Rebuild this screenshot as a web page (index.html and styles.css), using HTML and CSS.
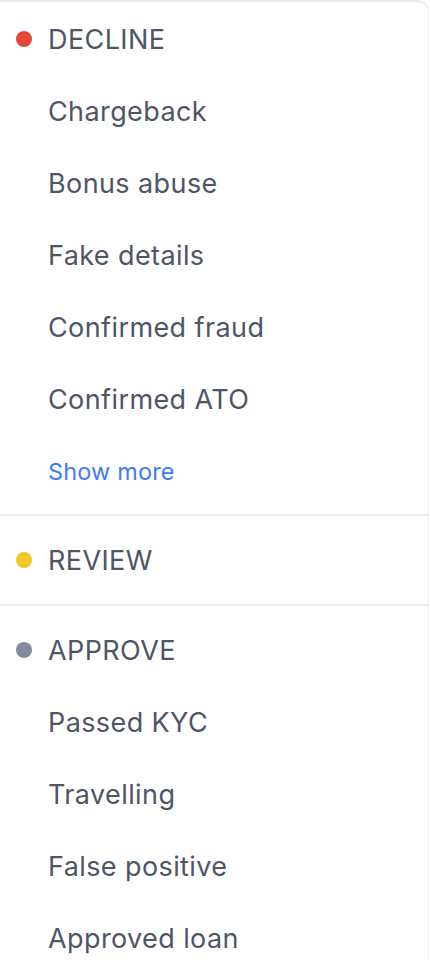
FILE: index.html
```html
<!DOCTYPE html>
<html lang="en">
<head>
<meta charset="utf-8">
<link rel="stylesheet" href="styles.css">
</head>
<body>
<div class="card">
  <section class="group">
    <div class="head"><span class="dot red"></span><span>DECLINE</span></div>
    <div class="item">Chargeback</div>
    <div class="item">Bonus abuse</div>
    <div class="item">Fake details</div>
    <div class="item">Confirmed fraud</div>
    <div class="item">Confirmed ATO</div>
    <div class="more">Show more</div>
  </section>
  <section class="group">
    <div class="head"><span class="dot yellow"></span><span>REVIEW</span></div>
  </section>
  <section class="group">
    <div class="head"><span class="dot gray"></span><span>APPROVE</span></div>
    <div class="item">Passed KYC</div>
    <div class="item">Travelling</div>
    <div class="item">False positive</div>
    <div class="item">Approved loan</div>
  </section>
  <div class="fade"></div>
</div>
</body>
</html>
```
FILE: styles.css
```css
* { box-sizing: border-box; }
html, body { margin: 0; padding: 0; background: #fff; }
body { font-family: Inter, "Noto Sans", sans-serif; color: #4f5566; overflow: hidden; height: 960px; }
.card {
  position: relative;
  margin-left: -12px;
  width: 441px;
  border-top: 2px solid #e8e8ea;
  border-right: 1px solid #efeff1;
  border-top-right-radius: 12px;
  min-height: 960px;
}
.group { border-bottom: 2px solid #ececf0; padding: 8px 0; }
.group:first-child { padding-top: 1px; padding-bottom: 7px; }
.group:last-of-type { border-bottom: none; }
.head, .item, .more {
  height: 72px;
  display: flex;
  align-items: center;
  font-size: 27px;
  font-weight: 370;
  letter-spacing: 0.4px;
}
.head { padding-left: 28px; gap: 16px; }
.item, .more { padding-left: 60px; }
.more { font-size: 23.5px; letter-spacing: 0.15px; color: #3f7cf4; }
.dot { width: 16px; height: 16px; border-radius: 50%; flex: none; }
.red { background: #e5483b; }
.yellow { background: #f0c628; }
.gray { background: #838a9c; }
.fade {
  position: absolute; left: 0; right: 0; bottom: 0; height: 22px;
  background: linear-gradient(to bottom, rgba(240,240,242,0), rgba(240,240,242,0.55));
  pointer-events: none;
}
```
